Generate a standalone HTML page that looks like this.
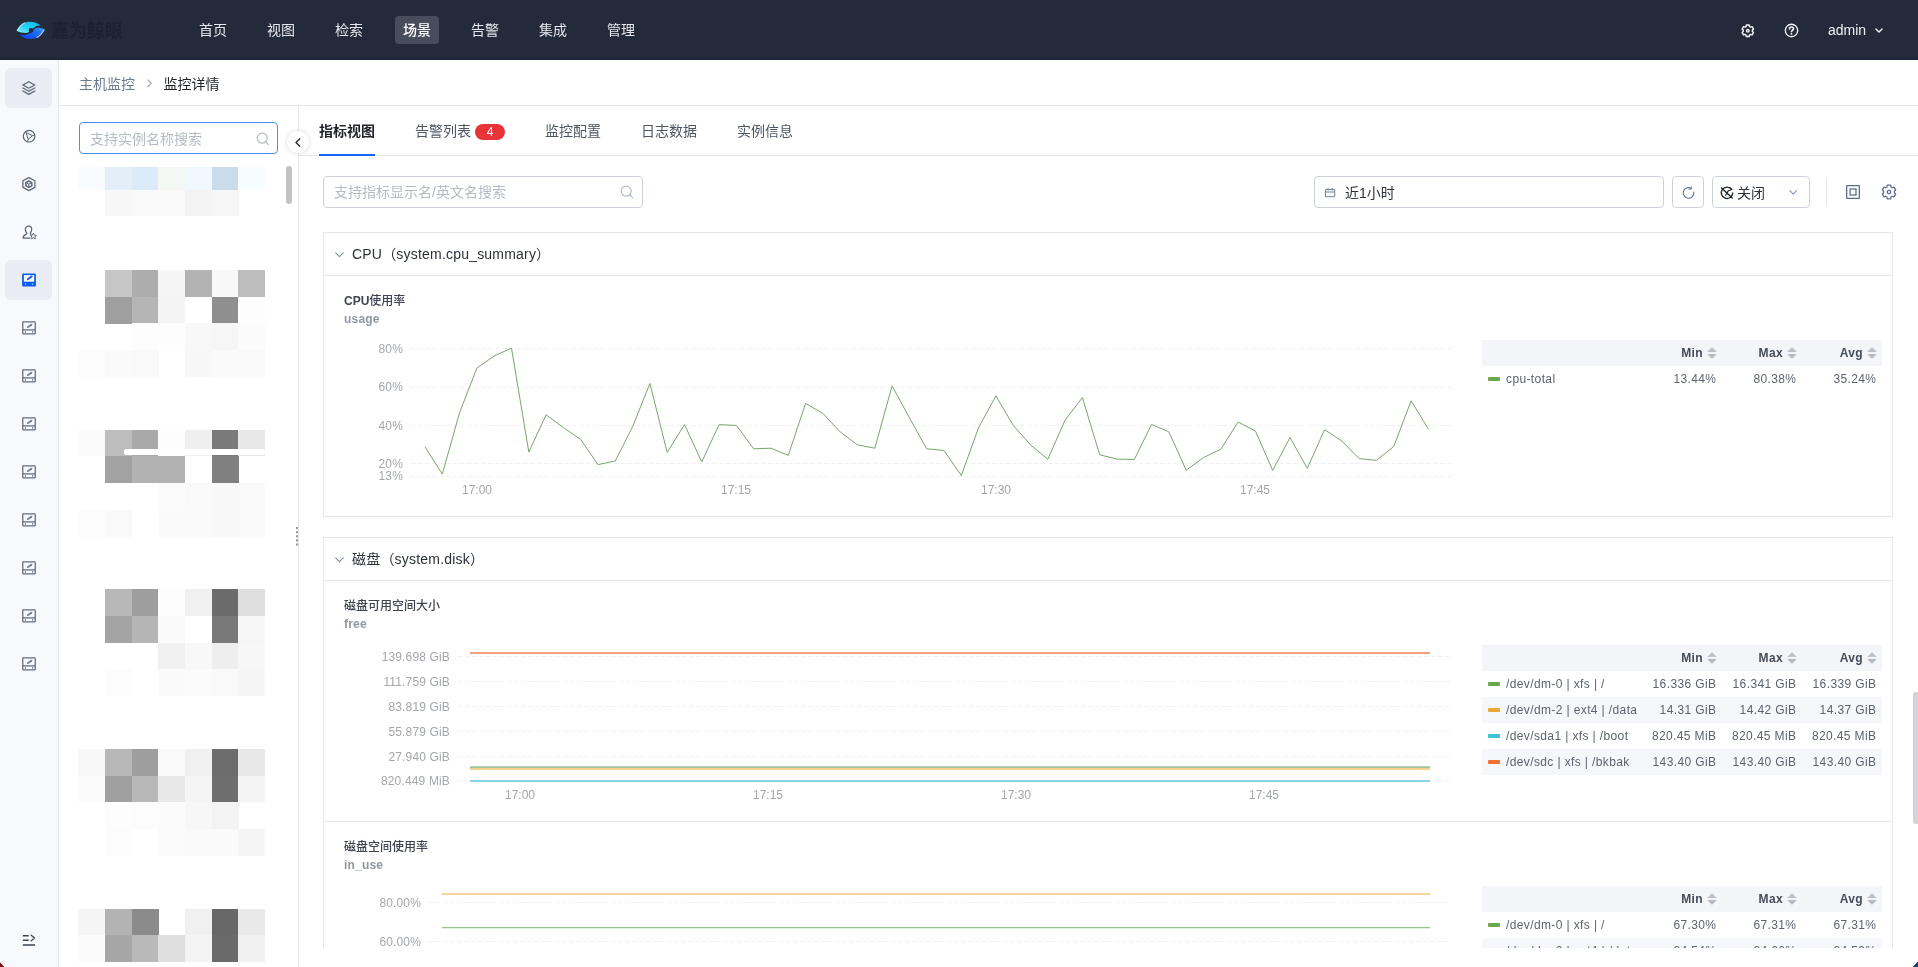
<!DOCTYPE html>
<html lang="zh-CN">
<head>
<meta charset="utf-8">
<title>监控详情</title>
<style>
*{box-sizing:border-box;margin:0;padding:0}
html,body{width:1918px;height:967px;overflow:hidden;background:#fff}
#top,#crumb,.tab,.inp,#clip,#lsearch,#badge{will-change:transform}
body{position:relative;font-family:"Liberation Sans","Noto Sans CJK SC",sans-serif;font-size:14px;color:#2b303b;-webkit-font-smoothing:antialiased}
.abs{position:absolute}
svg{display:block;overflow:visible}
/* top bar */
#top{position:absolute;left:0;top:0;width:1918px;height:60px;background:#232a39;box-shadow:inset 0 -3px 0 #1f2638}
#top .nav{position:absolute;top:16px;height:28px;line-height:28px;font-size:14px;color:#e6e8ee;padding:0 8px;border-radius:4px;white-space:nowrap}
#top .nav.on{background:#474d5b;color:#fff;font-weight:500}
#logoText{position:absolute;left:51px;top:18px;font-size:18px;line-height:26px;font-weight:700;color:#1b2130;letter-spacing:-0.1px;white-space:nowrap}
#admin{position:absolute;left:1828px;top:20px;font-size:14px;line-height:20px;color:#eef0f4}
/* rail */
#rail{position:absolute;left:0;top:60px;width:59px;height:907px;background:#f7f9fc;border-right:1px solid #e3e6ec}
.ri{position:absolute;left:5px;width:47px;height:40px;border-radius:6px}
.ri.sel{background:#e9ecf2}
.ri svg{position:absolute;left:15px;top:12px}
/* breadcrumb */
#crumb{position:absolute;left:59px;top:60px;width:1859px;height:46px;background:#fff;border-bottom:1px solid #e4e7ec}
#crumb span{position:absolute;top:12.5px;line-height:22px;font-size:14px;white-space:nowrap}
/* left panel */
#left{position:absolute;left:59px;top:106px;width:240px;height:861px;background:#fff;border-right:1px solid #e4e7ec}
#lsearch{position:absolute;left:79px;top:122px;width:199px;height:32px;border:1px solid #4d8cf5;border-radius:4px;background:#fff}
#lsearch span{position:absolute;left:10px;top:5px;font-size:14px;line-height:22px;color:#b5bbc6;white-space:nowrap}
.mz{position:absolute}
/* tabs */
.tab{position:absolute;top:120px;font-size:14px;line-height:22px;color:#4e5665;white-space:nowrap}
.tab.on{color:#1f2329;font-weight:700}
#tabline{position:absolute;left:299px;top:155px;width:1619px;height:1px;background:#e4e7ec}
#tabink{position:absolute;left:319px;top:154px;width:56px;height:2px;background:#1664ff}
#badge{position:absolute;left:475px;top:124px;width:30px;height:16px;border-radius:8px;background:#ea3338;color:#fff;font-size:12px;line-height:16px;text-align:center}
/* toolbar */
.inp{position:absolute;top:176px;height:32px;border:1px solid #ccd2dc;border-radius:4px;background:#fff}
.inp .t{position:absolute;top:5px;font-size:14px;line-height:20px;white-space:nowrap}
/* sections */
.sec{position:absolute;left:323px;width:1570px;border:1px solid #e4e7ec;background:#fff}
.sech{position:absolute;left:0;top:0;width:100%;height:43px;border-bottom:1px solid #e4e7ec}
.sech .tt{position:absolute;left:28px;top:10px;font-size:14px;line-height:22px;color:#2b303b;white-space:nowrap;letter-spacing:0.2px}
.ct{position:absolute;font-size:12px;line-height:18px;font-weight:500;color:#3f4452;white-space:nowrap}
.ct b{font-weight:700}
.cs{position:absolute;font-size:12px;line-height:18px;font-weight:700;color:#9096a2;white-space:nowrap;letter-spacing:0.2px}
.yl{position:absolute;font-size:12px;line-height:14px;color:#a3a6ac;text-align:right;white-space:nowrap;letter-spacing:0.15px}
.xl{position:absolute;font-size:12px;line-height:14px;color:#a3a6ac;text-align:center;width:60px;white-space:nowrap}
/* legend tables */
.lg{position:absolute;left:1482px;width:400px;font-size:12px;color:#5c6370;letter-spacing:0.38px}
.lg .r{position:absolute;left:0;width:400px;height:26px}
.lg .r.h{background:#f4f5f9;font-weight:700;color:#454b59}
.lg .r.a{background:#f6f7fb}
.lg .r span{position:absolute;top:6px;line-height:14px;white-space:nowrap}
.lg .r i{position:absolute;left:6px;top:11px;width:12px;height:4px;border-radius:1px}
.lg .r .n{left:24px}
.lg .r .c1{right:165.6px;text-align:right}
.lg .r .c2{right:85.6px;text-align:right}
.lg .r .c3{right:5.6px;text-align:right}
</style>
</head>
<body>

<!-- TOP BAR -->
<div id="top">
  <svg class="abs" style="left:16px;top:21px" width="30" height="19" viewBox="0 0 30 19">
    <defs>
      <linearGradient id="lgA" x1="0" y1="1" x2="1" y2="0"><stop offset="0" stop-color="#8ff4ff"/><stop offset="0.45" stop-color="#25cdf3"/><stop offset="1" stop-color="#12b4e6"/></linearGradient>
      <linearGradient id="lgB" x1="0" y1="1" x2="1" y2="0"><stop offset="0" stop-color="#1238f0"/><stop offset="0.6" stop-color="#1a6cf8"/><stop offset="1" stop-color="#3fa0ff"/></linearGradient>
    </defs>
    <path d="M0.6 9.8 C3 5 7.5 0.8 13 0.65 C18.5 0.5 23 2.5 25.6 5.1 C22.5 4.6 20 5.6 18.3 7.2 C16.5 9 15.5 11 12.5 11.8 C9 12.6 4 11.5 0.6 9.8 Z" fill="url(#lgA)"/>
    <path d="M29 8.3 C26.5 13 22 17.8 15.5 18.1 C10 18.3 5.8 16 3.4 13.5 C7 14.3 10.5 13.8 12.5 12.3 C14.5 10.5 15 8.5 18 7.4 C21.5 6.2 25.5 6.8 29 8.3 Z" fill="url(#lgB)"/>
    <path d="M1.2 9.6 C3.4 5.6 6 3 9 1.8" stroke="#d8fbff" stroke-width="1.1" fill="none" opacity=".8"/>
    <path d="M28.2 8.8 C26 12.8 23.4 15.4 20.4 16.8" stroke="#cfe6ff" stroke-width="1.1" fill="none" opacity=".8"/>
    <path d="M25.2 5 C21.5 4.6 19.5 6 18 7.4 C16 9.4 15 11.4 12.4 12.2 C9.5 13.2 6 13.6 3.6 13.4" stroke="#232a39" stroke-width="1.3" fill="none"/>
    <circle cx="15" cy="9.4" r="2.3" fill="#232a39"/>
  </svg>
  <div id="logoText">嘉为鲸眼</div>
  <div class="nav" style="left:191px">首页</div>
  <div class="nav" style="left:259px">视图</div>
  <div class="nav" style="left:327px">检索</div>
  <div class="nav on" style="left:395px">场景</div>
  <div class="nav" style="left:463px">告警</div>
  <div class="nav" style="left:531px">集成</div>
  <div class="nav" style="left:599px">管理</div>
  <!-- gear -->
  <svg class="abs" style="left:1741px;top:23.5px" width="13.6" height="13.6" viewBox="0 0 16 16" fill="none" stroke="#f2f4f8" stroke-width="1.7" stroke-linejoin="round"><path d="M10.02 2.99 L9.69 1.21 L6.31 1.21 L5.98 2.99 L4.68 3.74 L2.96 3.14 L1.27 6.07 L2.65 7.25 L2.65 8.75 L1.27 9.93 L2.96 12.86 L4.68 12.26 L5.98 13.01 L6.31 14.79 L9.69 14.79 L10.02 13.01 L11.32 12.26 L13.04 12.86 L14.73 9.93 L13.35 8.75 L13.35 7.25 L14.73 6.07 L13.04 3.14 L11.32 3.74 Z"/><circle cx="8" cy="8" r="1.5"/></svg>
  <!-- help -->
  <svg class="abs" style="left:1784px;top:23px" width="15" height="15" viewBox="0 0 16 16" fill="none" stroke="#f2f4f8" stroke-width="1.5">
    <circle cx="8" cy="8" r="6.6"/>
    <path d="M5.8 6.4 C5.8 5 6.8 4.2 8 4.2 C9.3 4.2 10.2 5.1 10.2 6.2 C10.2 7.8 8 7.7 8 9.4" stroke-linecap="round" stroke-width="1.7"/>
    <circle cx="8" cy="11.6" r="0.95" fill="#f2f4f8" stroke="none"/>
  </svg>
  <div id="admin">admin</div>
  <svg class="abs" style="left:1875px;top:28px" width="8" height="5.3" viewBox="0 0 9 6" fill="none" stroke="#f2f4f8" stroke-width="1.6" stroke-linecap="round" stroke-linejoin="round"><path d="M1 1 L4.5 4.5 L8 1"/></svg>
</div>

<!-- RAIL -->
<div id="rail">
  <div class="abs" style="left:5px;top:8px;width:47px;height:40px;border-radius:6px;background:#e9ecf2"></div>
  <div class="abs" style="left:5px;top:200px;width:47px;height:40px;border-radius:6px;background:#e9ecf2"></div>
</div>
<!-- rail icons (page coords) -->
<svg class="abs" style="left:22px;top:81px" width="14" height="14" viewBox="0 0 14 14" fill="none" stroke="#5b6678" stroke-width="1.25" stroke-linejoin="round" stroke-linecap="round"><path d="M6.8 0.7 L12.8 3.95 L6.8 7.2 L0.9 3.95 Z"/><path d="M0.9 7 L6.8 10.3 L12.8 7"/><path d="M0.9 10 L6.8 13.4 L12.8 10"/></svg>
<svg class="abs" style="left:22px;top:129px" width="14" height="14" viewBox="0 0 14 14" fill="none" stroke="#5b6678" stroke-width="1.2" stroke-linejoin="round"><circle cx="7.1" cy="7.2" r="5.8"/><path d="M4.2 3.6 L10.6 6.6 L6 10.3 Z" stroke-width="1"/><path d="M4.2 3.6 L3 2.9 M10.6 6.6 L12.8 6.2 M6 10.3 L5.8 12.8" stroke-width="1"/></svg>
<svg class="abs" style="left:22px;top:177px" width="14" height="14" viewBox="0 0 14 14" fill="none" stroke="#5b6678" stroke-width="1.25" stroke-linejoin="round"><path d="M6.8 0.6 L12.9 3.8 V10.4 L6.8 13.6 L0.9 10.4 V3.8 Z"/><path d="M6.8 4 L9.8 5.6 V8.8 L6.8 10.4 L3.9 8.8 V5.6 Z" stroke-width="1.5"/><path d="M3.9 5.6 L6.8 7.2 L9.8 5.6 M6.8 7.2 V10.4" stroke-width="1"/></svg>
<svg class="abs" style="left:22px;top:225px" width="16" height="14" viewBox="0 0 16 14" fill="none" stroke="#5b6678" stroke-width="1.2" stroke-linejoin="round"><path d="M6.6 1.2 C8.6 1.2 9.7 2.7 9.7 4.6 C9.7 6.1 9 7.2 8.3 7.8 C8.1 8.6 8.6 9.2 9.4 9.6 M1 13.2 C1 10.8 2.6 10 4 9.4 C4.8 9 5 8.4 4.7 7.8 C4 7.2 3.3 6.1 3.3 4.6 C3.3 2.7 4.6 1.2 6.6 1.2 M1 13.2 H8.4"/><path d="M11.4 8.2 L12.3 10.1 L14.4 10.4 L12.9 11.8 L13.3 13.8 L11.4 12.8 L9.6 13.8 L10 11.8 L8.5 10.4 L10.5 10.1 Z" stroke-width="1"/></svg>
<svg class="abs" style="left:22px;top:273px" width="14" height="14" viewBox="0 0 14 14" fill="none"><rect x="0.1" y="0.4" width="13.8" height="13.2" rx="1" fill="#0b5cf5"/><rect x="1.9" y="2.1" width="10.3" height="6.6" fill="#fafcff"/><path d="M5.8 6.3 L9.8 3.3" stroke="#1555d8" stroke-width="1.7" stroke-linecap="round"/><path d="M3.5 10.7 V11.7 M10.6 10.7 V11.7" stroke="#9cc0ff" stroke-width="1" stroke-linecap="round"/></svg>
<svg class="abs" style="left:22px;top:321px" width="14" height="14" viewBox="0 0 14 14" fill="none" stroke="#646e80" stroke-width="1.3"><rect x="0.75" y="0.85" width="12.5" height="12.1" rx="0.8"/><path d="M0.8 8.9 H13.2"/><path d="M5.8 6.2 L9.6 3.6" stroke-width="1.6" stroke-linecap="round"/><path d="M3.4 10.6 V11.4 M10.6 10.6 V11.4" stroke-width="1" stroke-linecap="round"/></svg>
<svg class="abs" style="left:22px;top:369px" width="14" height="14" viewBox="0 0 14 14" fill="none" stroke="#646e80" stroke-width="1.3"><rect x="0.75" y="0.85" width="12.5" height="12.1" rx="0.8"/><path d="M0.8 8.9 H13.2"/><path d="M5.8 6.2 L9.6 3.6" stroke-width="1.6" stroke-linecap="round"/><path d="M3.4 10.6 V11.4 M10.6 10.6 V11.4" stroke-width="1" stroke-linecap="round"/></svg>
<svg class="abs" style="left:22px;top:417px" width="14" height="14" viewBox="0 0 14 14" fill="none" stroke="#646e80" stroke-width="1.3"><rect x="0.75" y="0.85" width="12.5" height="12.1" rx="0.8"/><path d="M0.8 8.9 H13.2"/><path d="M5.8 6.2 L9.6 3.6" stroke-width="1.6" stroke-linecap="round"/><path d="M3.4 10.6 V11.4 M10.6 10.6 V11.4" stroke-width="1" stroke-linecap="round"/></svg>
<svg class="abs" style="left:22px;top:465px" width="14" height="14" viewBox="0 0 14 14" fill="none" stroke="#646e80" stroke-width="1.3"><rect x="0.75" y="0.85" width="12.5" height="12.1" rx="0.8"/><path d="M0.8 8.9 H13.2"/><path d="M5.8 6.2 L9.6 3.6" stroke-width="1.6" stroke-linecap="round"/><path d="M3.4 10.6 V11.4 M10.6 10.6 V11.4" stroke-width="1" stroke-linecap="round"/></svg>
<svg class="abs" style="left:22px;top:513px" width="14" height="14" viewBox="0 0 14 14" fill="none" stroke="#646e80" stroke-width="1.3"><rect x="0.75" y="0.85" width="12.5" height="12.1" rx="0.8"/><path d="M0.8 8.9 H13.2"/><path d="M5.8 6.2 L9.6 3.6" stroke-width="1.6" stroke-linecap="round"/><path d="M3.4 10.6 V11.4 M10.6 10.6 V11.4" stroke-width="1" stroke-linecap="round"/></svg>
<svg class="abs" style="left:22px;top:561px" width="14" height="14" viewBox="0 0 14 14" fill="none" stroke="#646e80" stroke-width="1.3"><rect x="0.75" y="0.85" width="12.5" height="12.1" rx="0.8"/><path d="M0.8 8.9 H13.2"/><path d="M5.8 6.2 L9.6 3.6" stroke-width="1.6" stroke-linecap="round"/><path d="M3.4 10.6 V11.4 M10.6 10.6 V11.4" stroke-width="1" stroke-linecap="round"/></svg>
<svg class="abs" style="left:22px;top:609px" width="14" height="14" viewBox="0 0 14 14" fill="none" stroke="#646e80" stroke-width="1.3"><rect x="0.75" y="0.85" width="12.5" height="12.1" rx="0.8"/><path d="M0.8 8.9 H13.2"/><path d="M5.8 6.2 L9.6 3.6" stroke-width="1.6" stroke-linecap="round"/><path d="M3.4 10.6 V11.4 M10.6 10.6 V11.4" stroke-width="1" stroke-linecap="round"/></svg>
<svg class="abs" style="left:22px;top:657px" width="14" height="14" viewBox="0 0 14 14" fill="none" stroke="#646e80" stroke-width="1.3"><rect x="0.75" y="0.85" width="12.5" height="12.1" rx="0.8"/><path d="M0.8 8.9 H13.2"/><path d="M5.8 6.2 L9.6 3.6" stroke-width="1.6" stroke-linecap="round"/><path d="M3.4 10.6 V11.4 M10.6 10.6 V11.4" stroke-width="1" stroke-linecap="round"/></svg>
<svg class="abs" style="left:22px;top:932.6px" width="14" height="14" viewBox="0 0 14 14" fill="none" stroke="#3b4354" stroke-width="1.5"><path d="M0.8 2.8 H6.8 M0.8 7.3 H6.8 M0.8 12.1 H13"/><path d="M9.2 2.2 L12.6 5 L9.2 7.8" stroke-linejoin="round" stroke-linecap="round" stroke-width="1.3"/></svg>


<!-- BREADCRUMB -->
<div id="crumb">
  <span style="left:20px;color:#6b7a8f">主机监控</span>
  <svg class="abs" style="left:88px;top:18.7px" width="5.2" height="8.6" viewBox="0 0 6 10" fill="none" stroke="#a3aab6" stroke-width="1.4" stroke-linecap="round" stroke-linejoin="round"><path d="M1 1 L5 5 L1 9"/></svg>
  <span style="left:104.5px;color:#1f2329">监控详情</span>
</div>

<!-- LEFT PANEL -->
<div id="left"></div>
<div id="lsearch"><span>支持实例名称搜索</span>
  <svg class="abs" style="left:176px;top:9px" width="14" height="14" viewBox="0 0 14 14" fill="none" stroke="#b5bbc6" stroke-width="1.2" stroke-linecap="round"><circle cx="6.2" cy="6.2" r="5"/><path d="M10 10 L12.6 12.6"/></svg>
</div>
<svg id="mosaic" class="abs" style="left:0;top:0" width="300" height="967" viewBox="0 0 300 967" shape-rendering="crispEdges">
<rect x="78.2" y="166.8" width="26.9" height="23.1" fill="#f8fcff"/>
<rect x="104.9" y="166.8" width="26.9" height="23.1" fill="#e3eef8"/>
<rect x="131.6" y="166.8" width="26.9" height="23.1" fill="#dcebf9"/>
<rect x="158.3" y="166.8" width="26.9" height="23.1" fill="#f4f8f4"/>
<rect x="184.9" y="166.8" width="26.9" height="23.1" fill="#eef8fd"/>
<rect x="211.6" y="166.8" width="26.9" height="23.1" fill="#cadcea"/>
<rect x="238.3" y="166.8" width="26.9" height="23.1" fill="#f7fcfe"/>
<rect x="104.9" y="189.9" width="26.9" height="26.3" fill="#f7f7f7"/>
<rect x="131.6" y="189.9" width="26.9" height="26.3" fill="#f9f9f9"/>
<rect x="158.3" y="189.9" width="26.9" height="26.3" fill="#fafafa"/>
<rect x="184.9" y="189.9" width="26.9" height="26.3" fill="#f3f3f3"/>
<rect x="211.6" y="189.9" width="26.9" height="26.3" fill="#f6f6f6"/>
<rect x="104.9" y="269.9" width="26.9" height="26.9" fill="#c6c6c6"/>
<rect x="131.6" y="269.9" width="26.9" height="26.9" fill="#adadad"/>
<rect x="158.3" y="269.9" width="26.9" height="26.9" fill="#f5f5f5"/>
<rect x="184.9" y="269.9" width="26.9" height="26.9" fill="#b3b3b3"/>
<rect x="211.6" y="269.9" width="26.9" height="26.9" fill="#f8f8f8"/>
<rect x="238.3" y="269.9" width="26.9" height="26.9" fill="#bdbdbd"/>
<rect x="104.9" y="296.6" width="26.9" height="26.9" fill="#9f9f9f"/>
<rect x="131.6" y="296.6" width="26.9" height="26.9" fill="#b5b5b5"/>
<rect x="158.3" y="296.6" width="26.9" height="26.9" fill="#f4f4f4"/>
<rect x="211.6" y="296.6" width="26.9" height="26.9" fill="#8f8f8f"/>
<rect x="238.3" y="296.6" width="26.9" height="26.9" fill="#fdfdfd"/>
<rect x="131.6" y="323.3" width="26.9" height="26.9" fill="#fcfcfc"/>
<rect x="158.3" y="323.3" width="26.9" height="26.9" fill="#fdfdfd"/>
<rect x="184.9" y="323.3" width="26.9" height="26.9" fill="#f8f8f8"/>
<rect x="211.6" y="323.3" width="26.9" height="26.9" fill="#f6f6f6"/>
<rect x="238.3" y="323.3" width="26.9" height="26.9" fill="#fbfbfb"/>
<rect x="78.2" y="349.9" width="26.9" height="26.9" fill="#fcfcfc"/>
<rect x="104.9" y="349.9" width="26.9" height="26.9" fill="#fafafa"/>
<rect x="131.6" y="349.9" width="26.9" height="26.9" fill="#f9f9f9"/>
<rect x="184.9" y="349.9" width="26.9" height="26.9" fill="#f7f7f7"/>
<rect x="211.6" y="349.9" width="26.9" height="26.9" fill="#fafafa"/>
<rect x="238.3" y="349.9" width="26.9" height="26.9" fill="#f9f9f9"/>
<rect x="78.2" y="429.5" width="26.9" height="26.9" fill="#fbfbfb"/>
<rect x="104.9" y="429.5" width="26.9" height="26.9" fill="#bdbdbd"/>
<rect x="131.6" y="429.5" width="26.9" height="26.9" fill="#a9a9a9"/>
<rect x="158.3" y="429.5" width="26.9" height="26.9" fill="#fdfdfd"/>
<rect x="184.9" y="429.5" width="26.9" height="26.9" fill="#efefef"/>
<rect x="211.6" y="429.5" width="26.9" height="26.9" fill="#7a7a7a"/>
<rect x="238.3" y="429.5" width="26.9" height="26.9" fill="#e8e8e8"/>
<rect x="104.9" y="456.2" width="26.9" height="26.9" fill="#a2a2a2"/>
<rect x="131.6" y="456.2" width="26.9" height="26.9" fill="#b2b2b2"/>
<rect x="158.3" y="456.2" width="26.9" height="26.9" fill="#b1b1b1"/>
<rect x="211.6" y="456.2" width="26.9" height="26.9" fill="#808080"/>
<rect x="158.3" y="482.9" width="26.9" height="26.9" fill="#fbfbfb"/>
<rect x="184.9" y="482.9" width="26.9" height="26.9" fill="#f9f9f9"/>
<rect x="211.6" y="482.9" width="26.9" height="26.9" fill="#f8f8f8"/>
<rect x="238.3" y="482.9" width="26.9" height="26.9" fill="#f9f9f9"/>
<rect x="78.2" y="509.6" width="26.9" height="26.9" fill="#fcfcfc"/>
<rect x="104.9" y="509.6" width="26.9" height="26.9" fill="#f9f9f9"/>
<rect x="158.3" y="509.6" width="26.9" height="26.9" fill="#fafafa"/>
<rect x="184.9" y="509.6" width="26.9" height="26.9" fill="#f9f9f9"/>
<rect x="211.6" y="509.6" width="26.9" height="26.9" fill="#f8f8f8"/>
<rect x="238.3" y="509.6" width="26.9" height="26.9" fill="#f9f9f9"/>
<path d="M127 452 H262" stroke="#fff" stroke-width="6.5" stroke-linecap="round"/>
<rect x="104.9" y="589.2" width="26.9" height="26.9" fill="#b8b8b8"/>
<rect x="131.6" y="589.2" width="26.9" height="26.9" fill="#9e9e9e"/>
<rect x="158.3" y="589.2" width="26.9" height="26.9" fill="#fdfdfd"/>
<rect x="184.9" y="589.2" width="26.9" height="26.9" fill="#f0f0f0"/>
<rect x="211.6" y="589.2" width="26.9" height="26.9" fill="#6b6b6b"/>
<rect x="238.3" y="589.2" width="26.9" height="26.9" fill="#dfdfdf"/>
<rect x="104.9" y="615.9" width="26.9" height="26.9" fill="#a4a4a4"/>
<rect x="131.6" y="615.9" width="26.9" height="26.9" fill="#b5b5b5"/>
<rect x="158.3" y="615.9" width="26.9" height="26.9" fill="#fafafa"/>
<rect x="211.6" y="615.9" width="26.9" height="26.9" fill="#797979"/>
<rect x="238.3" y="615.9" width="26.9" height="26.9" fill="#f6f6f6"/>
<rect x="158.3" y="642.6" width="26.9" height="26.9" fill="#f0f0f0"/>
<rect x="184.9" y="642.6" width="26.9" height="26.9" fill="#f8f8f8"/>
<rect x="211.6" y="642.6" width="26.9" height="26.9" fill="#eeeeee"/>
<rect x="238.3" y="642.6" width="26.9" height="26.9" fill="#f7f7f7"/>
<rect x="104.9" y="669.2" width="26.9" height="26.9" fill="#fcfcfc"/>
<rect x="158.3" y="669.2" width="26.9" height="26.9" fill="#fafafa"/>
<rect x="184.9" y="669.2" width="26.9" height="26.9" fill="#fbfbfb"/>
<rect x="211.6" y="669.2" width="26.9" height="26.9" fill="#f9f9f9"/>
<rect x="238.3" y="669.2" width="26.9" height="26.9" fill="#f5f5f5"/>
<rect x="78.2" y="748.9" width="26.9" height="26.9" fill="#f8f8f8"/>
<rect x="104.9" y="748.9" width="26.9" height="26.9" fill="#b7b7b7"/>
<rect x="131.6" y="748.9" width="26.9" height="26.9" fill="#9e9e9e"/>
<rect x="158.3" y="748.9" width="26.9" height="26.9" fill="#fafafa"/>
<rect x="184.9" y="748.9" width="26.9" height="26.9" fill="#f0f0f0"/>
<rect x="211.6" y="748.9" width="26.9" height="26.9" fill="#6c6c6c"/>
<rect x="238.3" y="748.9" width="26.9" height="26.9" fill="#e8e8e8"/>
<rect x="78.2" y="775.5" width="26.9" height="26.9" fill="#fbfbfb"/>
<rect x="104.9" y="775.5" width="26.9" height="26.9" fill="#a0a0a0"/>
<rect x="131.6" y="775.5" width="26.9" height="26.9" fill="#b8b8b8"/>
<rect x="158.3" y="775.5" width="26.9" height="26.9" fill="#e8e8e8"/>
<rect x="184.9" y="775.5" width="26.9" height="26.9" fill="#f5f5f5"/>
<rect x="211.6" y="775.5" width="26.9" height="26.9" fill="#6e6e6e"/>
<rect x="238.3" y="775.5" width="26.9" height="26.9" fill="#f4f4f4"/>
<rect x="104.9" y="802.2" width="26.9" height="26.9" fill="#fdfdfd"/>
<rect x="131.6" y="802.2" width="26.9" height="26.9" fill="#fcfcfc"/>
<rect x="158.3" y="802.2" width="26.9" height="26.9" fill="#fbfbfb"/>
<rect x="184.9" y="802.2" width="26.9" height="26.9" fill="#f7f7f7"/>
<rect x="211.6" y="802.2" width="26.9" height="26.9" fill="#f3f3f3"/>
<rect x="104.9" y="828.9" width="26.9" height="26.9" fill="#fcfcfc"/>
<rect x="158.3" y="828.9" width="26.9" height="26.9" fill="#fbfbfb"/>
<rect x="184.9" y="828.9" width="26.9" height="26.9" fill="#fafafa"/>
<rect x="211.6" y="828.9" width="26.9" height="26.9" fill="#fafafa"/>
<rect x="238.3" y="828.9" width="26.9" height="26.9" fill="#f5f5f5"/>
<rect x="78.2" y="908.5" width="26.9" height="26.9" fill="#f5f5f5"/>
<rect x="104.9" y="908.5" width="26.9" height="26.9" fill="#b3b3b3"/>
<rect x="131.6" y="908.5" width="26.9" height="26.9" fill="#8b8b8b"/>
<rect x="184.9" y="908.5" width="26.9" height="26.9" fill="#f0f0f0"/>
<rect x="211.6" y="908.5" width="26.9" height="26.9" fill="#686868"/>
<rect x="238.3" y="908.5" width="26.9" height="26.9" fill="#e9e9e9"/>
<rect x="78.2" y="935.2" width="26.9" height="26.9" fill="#fbfbfb"/>
<rect x="104.9" y="935.2" width="26.9" height="26.9" fill="#a6a6a6"/>
<rect x="131.6" y="935.2" width="26.9" height="26.9" fill="#b9b9b9"/>
<rect x="158.3" y="935.2" width="26.9" height="26.9" fill="#dfdfdf"/>
<rect x="184.9" y="935.2" width="26.9" height="26.9" fill="#f4f4f4"/>
<rect x="211.6" y="935.2" width="26.9" height="26.9" fill="#6a6a6a"/>
<rect x="238.3" y="935.2" width="26.9" height="26.9" fill="#f0f0f0"/>
</svg>
<div class="abs" style="left:286px;top:166px;width:6px;height:38px;border-radius:3px;background:#c1c3c8"></div>

<!-- TABS -->
<div id="tabline"></div>
<div id="tabink"></div>
<div class="tab on" style="left:319px">指标视图</div>
<div class="tab" style="left:415px">告警列表</div>
<div id="badge">4</div>
<div class="tab" style="left:545px">监控配置</div>
<div class="tab" style="left:641px">日志数据</div>
<div class="tab" style="left:737px">实例信息</div>

<!-- collapse button -->
<div class="abs" style="left:287px;top:130.5px;width:22px;height:22px;border-radius:11px;background:#fff;box-shadow:0 0 4px rgba(30,40,60,.18)">
  <svg class="abs" style="left:7.6px;top:7.4px" width="6" height="9" viewBox="0 0 6 9" fill="none" stroke="#1f2329" stroke-width="1.3" stroke-linecap="round" stroke-linejoin="round"><path d="M4.8 0.8 L1 4.5 L4.8 8.2"/></svg>
</div>

<!--TOOLBAR-->
<div class="inp" style="left:323px;width:320px"><span class="t" style="left:10px;color:#b5bbc6">支持指标显示名/英文名搜索</span>
  <svg class="abs" style="left:296px;top:8px" width="14" height="14" viewBox="0 0 14 14" fill="none" stroke="#b5bbc6" stroke-width="1.2" stroke-linecap="round"><circle cx="6.2" cy="6.2" r="5"/><path d="M10 10 L12.6 12.6"/></svg>
</div>
<div class="inp" style="left:1314px;width:350px"><span class="t" style="left:30px;top:5.5px;color:#2b303b">近1小时</span>
  <svg class="abs" style="left:10px;top:10.6px" width="10.2" height="9.3" viewBox="0 0 11 10" fill="none" stroke="#6f83a3" stroke-width="1.1"><rect x="0.5" y="1.5" width="10" height="8" rx="1"/><path d="M0.5 4.2 H10.5 M3.2 0 V2.6 M7.8 0 V2.6"/></svg>
</div>
<div class="inp" style="left:1672px;width:32px">
  <svg class="abs" style="left:9px;top:9px" width="13" height="13" viewBox="0 0 13 13" fill="none" stroke="#5f7396" stroke-width="1.1" stroke-linecap="round"><path d="M8.99 2.22 A5.3 5.3 0 1 0 11.75 6.16"/><path d="M9.29 0.62 V3.12 H6.99" stroke-linejoin="round" stroke-width="0.9"/></svg>
</div>
<div class="inp" style="left:1712px;width:98px"><span class="t" style="left:24px;top:5.5px;color:#2b303b">关闭</span>
  <svg class="abs" style="left:7px;top:8.6px" width="14" height="14" viewBox="0 0 14 14" fill="none" stroke="#1f2329" stroke-width="1.35" stroke-linecap="round"><path d="M11.6 3.4 A5.7 5.7 0 1 0 12.7 7"/><path d="M9.6 1.4 L11.9 3.3 L9.4 4.4" stroke-width="1.1" stroke-linejoin="round"/><path d="M1.6 1.9 L12.2 12"/><path d="M5.6 9.2 L8.4 4.6" stroke-width="1.2"/></svg>
  <svg class="abs" style="left:76px;top:13.4px" width="8.4" height="5.4" viewBox="0 0 9 6" fill="none" stroke="#8093b0" stroke-width="1.2" stroke-linecap="round" stroke-linejoin="round"><path d="M0.8 0.8 L4.5 4.6 L8.2 0.8"/></svg>
</div>
<div class="abs" style="left:1826px;top:179px;width:1px;height:26px;background:#e4e7ec"></div>
<svg class="abs" style="left:1846px;top:185px" width="14" height="14" viewBox="0 0 14 14" fill="none" stroke="#5a6f90" stroke-width="1.3"><rect x="0.65" y="0.65" width="12.7" height="12.7" rx="0.6"/><rect x="4" y="4" width="6" height="6"/></svg>
<svg class="abs" style="left:1881px;top:184px" width="16" height="16" viewBox="0 0 16 16" fill="none" stroke="#5a6f90" stroke-width="1.3" stroke-linejoin="round"><path d="M10.02 2.99 L9.69 1.21 L6.31 1.21 L5.98 2.99 L4.68 3.74 L2.96 3.14 L1.27 6.07 L2.65 7.25 L2.65 8.75 L1.27 9.93 L2.96 12.86 L4.68 12.26 L5.98 13.01 L6.31 14.79 L9.69 14.79 L10.02 13.01 L11.32 12.26 L13.04 12.86 L14.73 9.93 L13.35 8.75 L13.35 7.25 L14.73 6.07 L13.04 3.14 L11.32 3.74 Z"/><circle cx="8" cy="8" r="1.7"/></svg>

<!--SECTIONS-->
<div id="clip" style="position:absolute;left:299px;top:156px;width:1619px;height:792px;overflow:hidden">
<div style="position:absolute;left:-299px;top:-156px;width:1918px;height:1100px">
  <!-- CPU section -->
  <div class="sec" style="top:232px;height:285px">
    <div class="sech"><svg class="abs" style="left:10.8px;top:18.6px" width="9" height="6" viewBox="0 0 9 6" fill="none" stroke="#7b8dab" stroke-width="1.1" stroke-linecap="round" stroke-linejoin="round"><path d="M0.7 0.8 L4.5 4.6 L8.3 0.8"/></svg><span class="tt">CPU（system.cpu_summary）</span></div>
  </div>
  <div class="ct" style="left:344px;top:292px"><b>CPU</b>使用率</div>
  <div class="cs" style="left:344px;top:310px">usage</div>
  <div class="yl" style="left:343px;width:60px;top:342px">80%</div>
  <div class="yl" style="left:343px;width:60px;top:380px">60%</div>
  <div class="yl" style="left:343px;width:60px;top:419px">40%</div>
  <div class="yl" style="left:343px;width:60px;top:456.6px">20%</div>
  <div class="yl" style="left:343px;width:60px;top:469px">13%</div>
  <div class="xl" style="left:447px;top:483px">17:00</div>
  <div class="xl" style="left:706px;top:483px">17:15</div>
  <div class="xl" style="left:966px;top:483px">17:30</div>
  <div class="xl" style="left:1225px;top:483px">17:45</div>
  <div class="lg" style="top:340px">
    <div class="r h" style="top:0"><span class="c1" style="right:179px">Min</span><span class="c2" style="right:99px">Max</span><span class="c3" style="right:19px">Avg</span><svg class="abs so" style="left:225px;top:7px" width="10" height="12" viewBox="0 0 10 12"><path d="M5 0.3 L9.9 5.1 H0.1 Z" fill="#bdc0c8"/><path d="M5 11.7 L9.9 6.9 H0.1 Z" fill="#b6b9c2"/></svg><svg class="abs so" style="left:305px;top:7px" width="10" height="12" viewBox="0 0 10 12"><path d="M5 0.3 L9.9 5.1 H0.1 Z" fill="#bdc0c8"/><path d="M5 11.7 L9.9 6.9 H0.1 Z" fill="#b6b9c2"/></svg><svg class="abs so" style="left:385px;top:7px" width="10" height="12" viewBox="0 0 10 12"><path d="M5 0.3 L9.9 5.1 H0.1 Z" fill="#bdc0c8"/><path d="M5 11.7 L9.9 6.9 H0.1 Z" fill="#b6b9c2"/></svg></div>
    <div class="r" style="top:26px"><i style="background:#6aa84f"></i><span class="n">cpu-total</span><span class="c1">13.44%</span><span class="c2">80.38%</span><span class="c3">35.24%</span></div>
  </div>

  <!-- Disk section -->
  <div class="sec" style="top:537px;height:600px">
    <div class="sech"><svg class="abs" style="left:10.8px;top:18.6px" width="9" height="6" viewBox="0 0 9 6" fill="none" stroke="#7b8dab" stroke-width="1.1" stroke-linecap="round" stroke-linejoin="round"><path d="M0.7 0.8 L4.5 4.6 L8.3 0.8"/></svg><span class="tt">磁盘（system.disk）</span></div>
    <div class="abs" style="left:0;top:283px;width:100%;height:1px;background:#e4e7ec"></div>
  </div>
  <div class="ct" style="left:344px;top:597px">磁盘可用空间大小</div>
  <div class="cs" style="left:344px;top:615px">free</div>
  <div class="yl" style="left:350px;width:100px;top:650px">139.698 GiB</div>
  <div class="yl" style="left:350px;width:100px;top:675px">111.759 GiB</div>
  <div class="yl" style="left:350px;width:100px;top:700px">83.819 GiB</div>
  <div class="yl" style="left:350px;width:100px;top:725px">55.879 GiB</div>
  <div class="yl" style="left:350px;width:100px;top:750px">27.940 GiB</div>
  <div class="yl" style="left:350px;width:100px;top:774px">820.449 MiB</div>
  <div class="xl" style="left:490px;top:788px">17:00</div>
  <div class="xl" style="left:738px;top:788px">17:15</div>
  <div class="xl" style="left:986px;top:788px">17:30</div>
  <div class="xl" style="left:1234px;top:788px">17:45</div>
  <div class="lg" style="top:645px">
    <div class="r h" style="top:0"><span class="c1" style="right:179px">Min</span><span class="c2" style="right:99px">Max</span><span class="c3" style="right:19px">Avg</span><svg class="abs so" style="left:225px;top:7px" width="10" height="12" viewBox="0 0 10 12"><path d="M5 0.3 L9.9 5.1 H0.1 Z" fill="#bdc0c8"/><path d="M5 11.7 L9.9 6.9 H0.1 Z" fill="#b6b9c2"/></svg><svg class="abs so" style="left:305px;top:7px" width="10" height="12" viewBox="0 0 10 12"><path d="M5 0.3 L9.9 5.1 H0.1 Z" fill="#bdc0c8"/><path d="M5 11.7 L9.9 6.9 H0.1 Z" fill="#b6b9c2"/></svg><svg class="abs so" style="left:385px;top:7px" width="10" height="12" viewBox="0 0 10 12"><path d="M5 0.3 L9.9 5.1 H0.1 Z" fill="#bdc0c8"/><path d="M5 11.7 L9.9 6.9 H0.1 Z" fill="#b6b9c2"/></svg></div>
    <div class="r" style="top:26px"><i style="background:#6aa84f"></i><span class="n">/dev/dm-0 | xfs | /</span><span class="c1">16.336 GiB</span><span class="c2">16.341 GiB</span><span class="c3">16.339 GiB</span></div>
    <div class="r a" style="top:52px"><i style="background:#e8a838"></i><span class="n">/dev/dm-2 | ext4 | /data</span><span class="c1">14.31 GiB</span><span class="c2">14.42 GiB</span><span class="c3">14.37 GiB</span></div>
    <div class="r" style="top:78px"><i style="background:#3fc1d6"></i><span class="n">/dev/sda1 | xfs | /boot</span><span class="c1">820.45 MiB</span><span class="c2">820.45 MiB</span><span class="c3">820.45 MiB</span></div>
    <div class="r a" style="top:104px"><i style="background:#f2703a"></i><span class="n">/dev/sdc | xfs | /bkbak</span><span class="c1">143.40 GiB</span><span class="c2">143.40 GiB</span><span class="c3">143.40 GiB</span></div>
  </div>

  <div class="ct" style="left:344px;top:838px">磁盘空间使用率</div>
  <div class="cs" style="left:344px;top:856px">in_use</div>
  <div class="yl" style="left:341px;width:80px;top:896px">80.00%</div>
  <div class="yl" style="left:341px;width:80px;top:935px">60.00%</div>
  <div class="lg" style="top:886px">
    <div class="r h" style="top:0"><span class="c1" style="right:179px">Min</span><span class="c2" style="right:99px">Max</span><span class="c3" style="right:19px">Avg</span><svg class="abs so" style="left:225px;top:7px" width="10" height="12" viewBox="0 0 10 12"><path d="M5 0.3 L9.9 5.1 H0.1 Z" fill="#bdc0c8"/><path d="M5 11.7 L9.9 6.9 H0.1 Z" fill="#b6b9c2"/></svg><svg class="abs so" style="left:305px;top:7px" width="10" height="12" viewBox="0 0 10 12"><path d="M5 0.3 L9.9 5.1 H0.1 Z" fill="#bdc0c8"/><path d="M5 11.7 L9.9 6.9 H0.1 Z" fill="#b6b9c2"/></svg><svg class="abs so" style="left:385px;top:7px" width="10" height="12" viewBox="0 0 10 12"><path d="M5 0.3 L9.9 5.1 H0.1 Z" fill="#bdc0c8"/><path d="M5 11.7 L9.9 6.9 H0.1 Z" fill="#b6b9c2"/></svg></div>
    <div class="r" style="top:26px"><i style="background:#6aa84f"></i><span class="n">/dev/dm-0 | xfs | /</span><span class="c1">67.30%</span><span class="c2">67.31%</span><span class="c3">67.31%</span></div>
    <div class="r a" style="top:52px"><i style="background:#e8a838"></i><span class="n">/dev/dm-2 | ext4 | /data</span><span class="c1">84.54%</span><span class="c2">84.66%</span><span class="c3">84.59%</span></div>
  </div>

  <!-- chart graphics -->
  <svg class="abs" style="left:0;top:0" width="1918" height="1100" viewBox="0 0 1918 1100" fill="none">
    <g stroke="#eff0f3" stroke-width="1" stroke-dasharray="4.5 2.5">
      <path d="M411 348.5 H1451 M411 387.5 H1451 M411 425.5 H1451 M411 463.5 H1451 M411 476.5 H1451"/>
      <path d="M458 656.5 H1451 M458 681.5 H1451 M458 706.5 H1451 M458 731.5 H1451 M458 756.5 H1451 M458 780.5 H1451"/>
      <path d="M429 902.5 H1451 M429 941.5 H1451"/>
    </g>
    <polyline points="425.0,446.9 442.3,474.1 459.6,412.6 476.9,368.1 494.2,355.9 511.5,348.2 528.8,452.0 546.1,414.8 563.4,427.6 580.7,439.4 598.0,464.6 615.3,461.0 632.6,426.7 649.9,383.5 667.2,452.4 684.5,424.6 701.8,461.9 719.1,424.6 736.4,425.5 753.7,448.8 771.0,448.2 788.3,455.4 805.6,403.4 822.9,413.5 840.2,431.9 857.5,444.9 874.8,448.2 892.1,385.9 909.4,417.8 926.7,448.8 944.0,450.5 961.3,475.5 978.6,427.6 995.9,395.9 1013.2,425.3 1030.5,444.9 1047.8,459.3 1065.1,420.1 1082.4,397.6 1099.7,454.8 1117.0,459.1 1134.3,459.5 1151.6,424.4 1168.9,431.9 1186.2,470.2 1203.5,457.6 1220.8,449.2 1238.1,422.0 1255.4,431.0 1272.7,470.4 1290.0,437.5 1307.3,468.3 1324.6,429.7 1341.9,441.1 1359.2,458.6 1376.5,460.4 1393.8,446.4 1411.1,400.8 1428.4,429.1" stroke="#74a868" stroke-width="1" stroke-linejoin="round"/>
    <path d="M470 653 H1430" stroke="#f4a17e" stroke-width="2"/>
    <path d="M470 767.2 H1430" stroke="#9cc59a" stroke-width="2"/>
    <path d="M470 769 H1430" stroke="#f6c567" stroke-width="1.4"/>
    <path d="M470 781 H1430" stroke="#86d7e4" stroke-width="2"/>
    <path d="M442 894 H1430" stroke="#f2c67b" stroke-width="1.4"/>
    <path d="M442 927.6 H1430" stroke="#92c78d" stroke-width="1.4"/>
  </svg>
</div>
</div>
<!-- page scrollbar -->
<div class="abs" style="left:1913px;top:691.5px;width:8px;height:132.5px;border-radius:3px;background:#d3d4d8"></div>
<!-- splitter grip -->
<svg class="abs" style="left:296px;top:527.3px" width="2" height="20" viewBox="0 0 2 20"><rect x="0" y="0.0" width="2" height="2.2" fill="#9a9a9a"/><rect x="0" y="4.1" width="2" height="2.2" fill="#9a9a9a"/><rect x="0" y="8.2" width="2" height="2.2" fill="#9a9a9a"/><rect x="0" y="12.3" width="2" height="2.2" fill="#9a9a9a"/><rect x="0" y="16.4" width="2" height="2.2" fill="#9a9a9a"/></svg>

<!--BOTTOM-->
<svg class="abs" style="left:0;top:957px" width="6" height="10" viewBox="0 0 6 10"><path d="M0 5.3 L4.4 10 H0 Z" fill="#7a1414"/></svg>
<svg class="abs" style="left:1911px;top:960px" width="7" height="7" viewBox="0 0 7 7"><path d="M7 1.5 L1.8 7 H7 Z" fill="#0f3f6e"/></svg>

</body>
</html>
